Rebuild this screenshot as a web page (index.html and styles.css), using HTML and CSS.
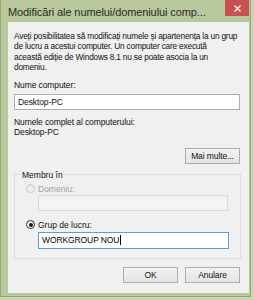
FILE: index.html
```html
<!DOCTYPE html>
<html lang="ro">
  <head>
    <meta charset="UTF-8" />
    <title>Modificări ale numelui/domeniului computerului</title>
    <link rel="stylesheet" href="styles.css">
  </head>
  <body>
    <div class="window">
      <div class="titlebar">
        <span class="title">Modificări ale numelui/domeniului comp...</span>
        <button class="close" aria-label="Închidere">
          <svg width="7" height="7" viewBox="0 0 7 7">
            <path d="M0.5 0.5L6.5 6.5M6.5 0.5L0.5 6.5" stroke="#fff" stroke-width="1.2" />
          </svg>
        </button>
      </div>
      <div class="panel">
        <p class="intro">
          Aveți posibilitatea să modificați numele și apartenența la un grup<br>
          de lucru a acestui computer. Un computer care execută<br>
          această ediție de Windows 8.1 nu se poate asocia la un<br>
          domeniu.
        </p>
        <div class="label first">Nume computer:</div>
        <div class="textbox wide">Desktop-PC</div>
        <div class="label second">Numele complet al computerului:</div>
        <div class="label">Desktop-PC</div>
        <div class="more-row">
          <button class="btn">Mai multe...</button>
        </div>
        <fieldset class="group">
          <legend>Membru în</legend>
          <div class="radio-row disabled">
            <span class="radio"></span>
            <span>Domeniu:</span>
          </div>
          <div class="textbox inner disabled-box"></div>
          <div class="radio-row second-radio">
            <span class="radio checked"></span>
            <span>Grup de lucru:</span>
          </div>
          <div class="textbox inner focused">WORKGROUP NOU<span class="caret"></span></div>
        </fieldset>
        <div class="actions">
          <button class="btn">OK</button>
          <button class="btn">Anulare</button>
        </div>
      </div>
    </div>
  </body>
</html>
```

FILE: styles.css
```css
* {
  margin: 0;
  padding: 0;
  box-sizing: border-box;
  font-family: "Liberation Sans", Arial, sans-serif;
}
body {
  width: 254px;
  height: 300px;
  background-color: #c9d7b3;
  overflow: hidden;
}
.window {
  width: 251px;
  height: 297px;
  background-color: #b8c89c;
  border: 1px solid #93a676;
  border-top: none;
  display: flex;
  flex-direction: column;
  padding: 0 1px 3px 7px;
}
.titlebar {
  height: 22px;
  display: flex;
  align-items: flex-start;
  justify-content: space-between;
}
.title {
  font-size: 11px;
  color: #2a2a2a;
  line-height: 12px;
  margin-top: 6px;
  letter-spacing: -0.1px;
}
.close {
  width: 24px;
  height: 16px;
  border: none;
  background-color: #c85050;
  display: flex;
  align-items: center;
  justify-content: center;
}
.panel {
  flex: 1;
  background-color: #f0f0f0;
  padding: 9px 9px 0 6px;
  display: flex;
  flex-direction: column;
  font-size: 8.5px;
  color: #111;
}
.intro {
  font-size: 8.3px;
  line-height: 10.4px;
  letter-spacing: -0.2px;
  white-space: nowrap;
}
.label {
  line-height: 10px;
  letter-spacing: -0.1px;
}
.label.first {
  margin-top: 7px;
}
.label.second {
  margin-top: 7px;
}
.textbox {
  height: 16px;
  background-color: #fff;
  border: 1px solid #abadb3;
  padding: 0 3px;
  line-height: 14px;
  letter-spacing: -0.1px;
}
.textbox.wide {
  margin-top: 4px;
}
.more-row {
  display: flex;
  justify-content: flex-end;
  margin-top: 11px;
}
.btn {
  width: 55px;
  height: 16px;
  font-size: 8.5px;
  letter-spacing: -0.1px;
  color: #111;
  border: 1px solid #acacac;
  background: linear-gradient(#f2f2f2, #e4e4e4);
}
.group {
  margin-top: 6px;
  border: 1px solid #dcdcdc;
  padding: 4px 11px 9px 11px;
}
.group legend {
  margin-left: -5px;
  padding: 0 1px;
  line-height: 10px;
}
.radio-row {
  display: flex;
  align-items: center;
  gap: 3px;
  height: 10px;
}
.radio-row.disabled {
  color: #a0a0a0;
}
.radio-row.second-radio {
  margin-top: 9px;
}
.radio {
  width: 9px;
  height: 9px;
  border-radius: 50%;
  border: 1px solid #333;
  background: linear-gradient(#eaeaea, #fff);
  display: flex;
  align-items: center;
  justify-content: center;
}
.disabled .radio {
  border-color: #c8c8c8;
  background: linear-gradient(#e6e6e6, #f4f4f4);
}
.radio.checked::after {
  content: "";
  width: 4px;
  height: 4px;
  border-radius: 50%;
  background-color: #1a1a1a;
}
.textbox.inner {
  margin-left: 12px;
  width: 190px;
}
.disabled-box {
  margin-top: 1px;
  background-color: #f4f4f4;
  border-color: #d9d9d9;
}
.textbox.focused {
  margin-top: 2px;
  height: 17px;
  border-color: #569de5;
  width: 191px;
  line-height: 15px;
  color: #000;
}
.caret {
  display: inline-block;
  width: 1px;
  height: 10px;
  background-color: #000;
  vertical-align: -2px;
  margin-left: 1px;
}
.actions {
  display: flex;
  justify-content: flex-end;
  gap: 7px;
  margin-top: 8px;
}
```
